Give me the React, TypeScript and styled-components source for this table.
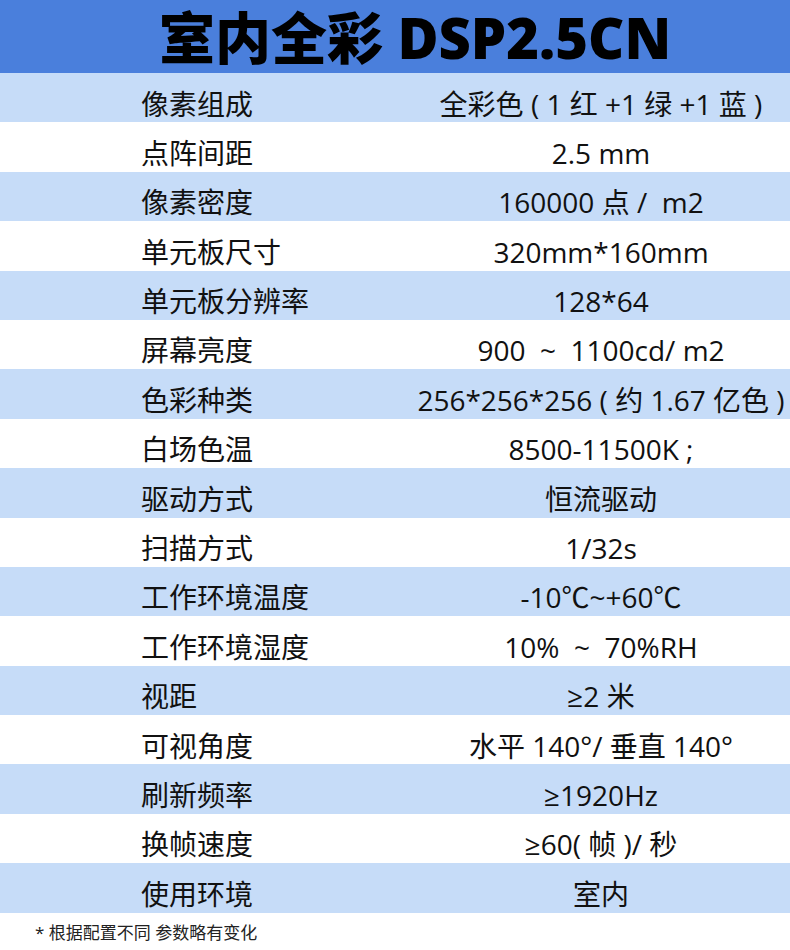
import React from "react";
import styled, { createGlobalStyle } from "styled-components";

const Global = createGlobalStyle`
  html, body { margin: 0; padding: 0; background: #ffffff; }
  body { font-family: "Open Sans", "Noto Sans CJK SC", sans-serif; color: #111; }
`;

const Page = styled.div`
  width: 790px;
  height: 950px;
  background: #ffffff;
  display: flex;
  flex-direction: column;
`;

const Header = styled.header`
  height: 73px;
  background: #4a7fdc;
  display: flex;
  align-items: center;
  justify-content: center;
  padding-left: 40px;
  box-sizing: border-box;
`;

const Title = styled.h1`
  margin: 0;
  font-family: "Open Sans", "Noto Sans CJK SC", sans-serif;
  font-weight: 800;
  font-size: 56px;
  line-height: 1.1;
  color: #000;
  padding: 2px 2px 0;
`;

const Table = styled.div`
  display: flex;
  flex-direction: column;
`;

const Row = styled.div<{ $shaded: boolean }>`
  height: 49.4px;
  display: grid;
  grid-template-columns: 412px 378px;
  align-items: center;
  background: ${(p) => (p.$shaded ? "#c6dcf8" : "#ffffff")};
  font-size: 28px;
  color: #111;
  padding-top: 12px;
  box-sizing: border-box;
`;

const Label = styled.div`
  padding-left: 141px;
  white-space: nowrap;
  line-height: 1.3;
`;

const Value = styled.div`
  text-align: center;
  white-space: pre;
  line-height: 1.3;
`;

const Note = styled.div`
  padding: 6px 0 0 35px;
  font-size: 17px;
  color: #222;
`;

const rows: [string, string][] = [
  ["像素组成", "全彩色 ( 1 红 +1 绿 +1 蓝 )"],
  ["点阵间距", "2.5 mm"],
  ["像素密度", "160000 点 /  m2"],
  ["单元板尺寸", "320mm*160mm"],
  ["单元板分辨率", "128*64"],
  ["屏幕亮度", "900  ~  1100cd/ m2"],
  ["色彩种类", "256*256*256 ( 约 1.67 亿色 )"],
  ["白场色温", "8500-11500K ;"],
  ["驱动方式", "恒流驱动"],
  ["扫描方式", "1/32s"],
  ["工作环境温度", "-10℃~+60℃"],
  ["工作环境湿度", "10%  ~  70%RH"],
  ["视距", "≥2 米"],
  ["可视角度", "水平 140°/ 垂直 140°"],
  ["刷新频率", "≥1920Hz"],
  ["换帧速度", "≥60( 帧 )/ 秒"],
  ["使用环境", "室内"],
];

export default function App() {
  return (
    <Page>
      <Global />
      <Header>
        <Title>室内全彩 DSP2.5CN</Title>
      </Header>
      <Table>
        {rows.map(([k, v], i) => (
          <Row key={k} $shaded={i % 2 === 0}>
            <Label>{k}</Label>
            <Value>{v}</Value>
          </Row>
        ))}
      </Table>
      <Note>* 根据配置不同 参数略有变化</Note>
    </Page>
  );
}
